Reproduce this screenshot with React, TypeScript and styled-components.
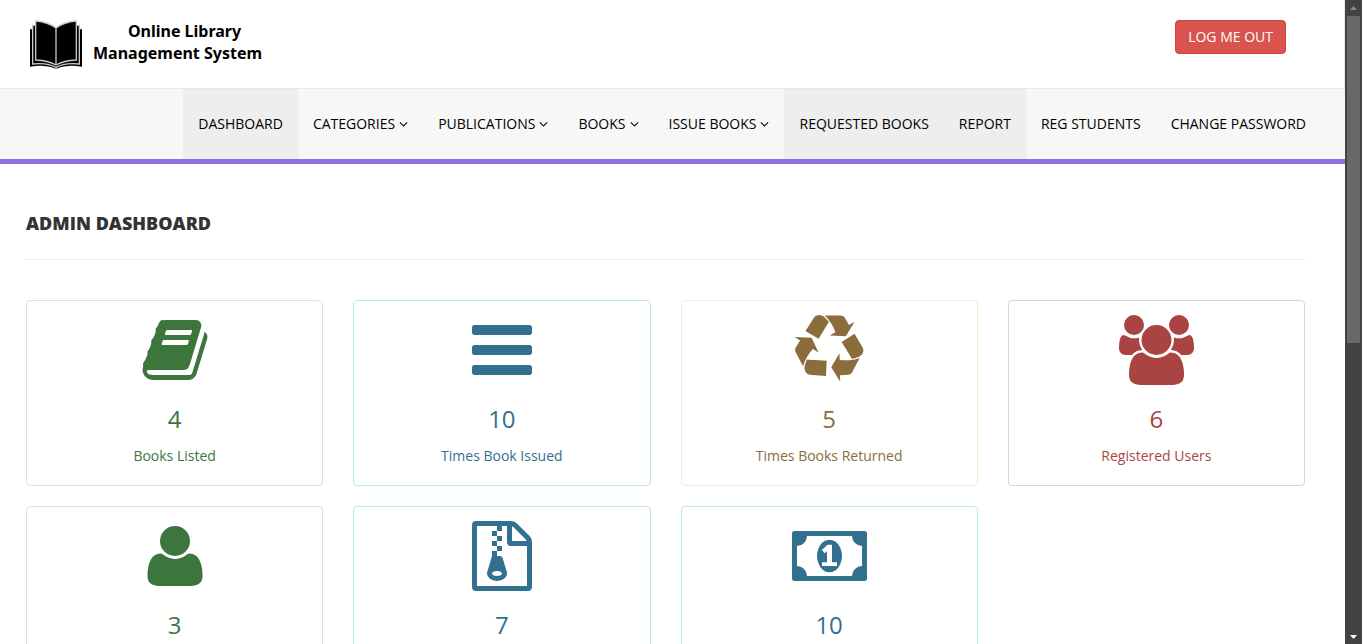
import React from "react";
import styled, { createGlobalStyle } from "styled-components";

const GlobalStyle = createGlobalStyle`
  *, *::before, *::after { box-sizing: border-box; }
  html, body { margin: 0; height: 100%; overflow: hidden; }
  body {
    background: #fff;
    color: #333;
    font-family: "Open Sans", "Liberation Sans", sans-serif;
    font-size: 14px;
    line-height: 20px;
  }
`;

const tones = {
  success: { text: "#3c763d", border: "#d6e9c6" },
  info: { text: "#31708f", border: "#bce8f1" },
  warning: { text: "#8a6d3b", border: "#faebcc" },
  danger: { text: "#a94442", border: "#ebccd1" },
};
type Tone = keyof typeof tones;

const Window = styled.div`
  display: grid;
  grid-template-columns: minmax(0, 1fr) 17px;
  height: 100vh;
  overflow: hidden;
`;

const Page = styled.div`
  min-width: 0;
  overflow: hidden;
`;

const Header = styled.header`
  display: flex;
  justify-content: space-between;
  align-items: flex-start;
  padding: 20px 58px 18px 30px;
  border-right: 1px solid #e7e7e7;
  border-bottom: 1px solid #e7e7e7;
`;

const Brand = styled.a`
  display: flex;
  align-items: flex-start;
  gap: 11px;
  color: #000;
  text-decoration: none;
`;

const BrandMark = styled.svg`
  width: 52px;
  height: 50px;
`;

const BrandName = styled.span`
  display: flex;
  flex-direction: column;
  font-family: "Noto Sans", "Open Sans", sans-serif;
  font-size: 16px;
  font-weight: 700;
  line-height: 22px;
  text-align: center;
`;

const BrandLine = styled.span<{ $indent?: boolean }>`
  padding-left: ${(p) => (p.$indent ? "14px" : "0")};
`;

const LogoutButton = styled.button`
  padding: 6px 12px;
  border: 1px solid #d43f3a;
  border-radius: 4px;
  background: #d9534f;
  color: #fff;
  font: inherit;
  cursor: pointer;
`;

const Nav = styled.nav`
  background: #f7f7f7;
  border-bottom: 5px solid #9170e4;
  padding-right: 24px;
`;

const NavList = styled.ul`
  display: flex;
  justify-content: flex-end;
  margin: 0;
  padding: 0;
  list-style: none;
`;

const NavLink = styled.a<{ $shaded?: boolean }>`
  display: flex;
  align-items: center;
  gap: 4px;
  padding: 25px 15px;
  background: ${(p) => (p.$shaded ? "#eee" : "transparent")};
  color: #000;
  text-decoration: none;
  white-space: nowrap;
`;

const Caret = styled.svg`
  width: 9px;
  height: 14px;
  fill: currentColor;
`;

const Main = styled.main`
  padding: 49px 40px 0 26px;
`;

const Title = styled.h1`
  margin: 0 0 40px;
  padding-bottom: 26px;
  border-bottom: 1px solid #eee;
  font-size: 18px;
  font-weight: 800;
  line-height: 20px;
`;

const Cards = styled.div`
  display: grid;
  grid-template-columns: repeat(4, minmax(0, 1fr));
  grid-auto-rows: minmax(186px, auto);
  gap: 20px 30px;
`;

const Card = styled.article<{ $tone: Tone }>`
  display: flex;
  flex-direction: column;
  align-items: center;
  padding: 14px 15px;
  border: 1px solid ${(p) => tones[p.$tone].border};
  border-radius: 4px;
  color: ${(p) => tones[p.$tone].text};
  text-align: center;
`;

const CardIcon = styled.svg`
  height: 70px;
  fill: currentColor;
`;

const Count = styled.h2`
  margin: 21px 0 14px;
  font-size: 24px;
  font-weight: 400;
  line-height: 26px;
`;

const Label = styled.span``;

const ScrollTrack = styled.div`
  display: flex;
  flex-direction: column;
  align-items: center;
  justify-content: space-between;
  background: #424242;
`;

const ScrollTop = styled.div`
  flex: 1;
  display: flex;
  flex-direction: column;
  align-items: center;
`;

const ScrollArrow = styled.svg`
  display: block;
  width: 17px;
  height: 16px;
`;

const ScrollThumb = styled.div`
  width: 13px;
  height: 52%;
  background: #686868;
`;

interface Glyph {
  width: number;
  d: string;
}

const glyphs: Record<string, Glyph> = {
  book: {
    width: 1792,
    d: "M1703 478q40 57 18 129l-275 906q-19 64-76.5 107.5t-122.5 43.5h-923q-77 0-148.5-53.5t-99.5-131.5q-24-67-2-127 0-4 3-27t4-37q1-8-3-21.5t-3-19.5q2-11 8-21t16.5-23.5 16.5-23.5q23-38 45-91.5t30-91.5q3-10 .5-30t-.5-28q3-11 17-28t17-23q21-36 42-92t25-90q1-9-2.5-32t.5-28q4-13 22-30.5t22-22.5q19-26 42.5-84.5t27.5-96.5q1-8-3-25.5t-2-26.5q2-8 9-18t18-23 17-21q8-12 16.5-30.5t15-35 16-36 19.5-32 26.5-23.5 36-11.5 47.5 5.5l-1 3q38-9 51-9h761q74 0 114 56t18 130l-274 906q-36 119-71.5 153.5t-128.5 34.5h-869q-27 0-38 15-11 16-1 43 24 70 144 70h923q29 0 56-15.5t35-41.5l300-987q7-22 5-57 38 15 59 43zm-1064 2q-4 13 2 22.5t20 9.5h608q13 0 25.5-9.5t16.5-22.5l21-64q4-13-2-22.5t-20-9.5h-608q-13 0-25.5 9.5t-16.5 22.5zm-83 256q-4 13 2 22.5t20 9.5h608q13 0 25.5-9.5t16.5-22.5l21-64q4-13-2-22.5t-20-9.5h-608q-13 0-25.5 9.5t-16.5 22.5z",
  },
  bars: {
    width: 1792,
    d: "M1664 1344v128q0 26-19 45t-45 19h-1408q-26 0-45-19t-19-45v-128q0-26 19-45t45-19h1408q26 0 45 19t19 45zm0-512v128q0 26-19 45t-45 19h-1408q-26 0-45-19t-19-45v-128q0-26 19-45t45-19h1408q26 0 45 19t19 45zm0-512v128q0 26-19 45t-45 19h-1408q-26 0-45-19t-19-45v-128q0-26 19-45t45-19h1408q26 0 45 19t19 45z",
  },
  recycle: {
    width: 1792,
    d: "M836 1169l-15 368-2 22-420-29q-36-3-67-31.5t-47-65.5q-11-27-14.5-55t4-65 12-55 21.5-64 19-53q78 12 509 28zm-387-586l180 379-147-92q-63 72-111.5 144.5t-72.5 125-39.5 94.5-18.5 63l-4 21-190-357q-17-26-18-56t6-47l8-18q35-63 114-188l-140-86zm1231 517l-188 359q-12 29-36.5 46.5t-43.5 20.5l-18 4q-71 7-219 12l8 164-230-367 211-362 7 173q170 16 283 5t170-33zm-785-924q-47 63-265 435l-317-187-19-12 225-356q20-31 60-45t80-10q24 2 48.5 12t42 21 41.5 33 36 34.5 36 39.5 32 35zm655 307l212 363q18 37 12.5 76t-27.5 74q-13 20-33 37t-38 28-48.5 22-47 16-51.5 14-46 12q-34-72-265-436l313-195zm-143-226l142-83-220 373-419-20 151-86q-34-89-75-166t-75.5-123.5-64.5-80-47-46.5l-17-13 405 1q31-3 58 10.5t39 28.5l11 15q39 61 112 190z",
  },
  users: {
    width: 1920,
    d: "M593 896q-162 5-265 128h-134q-82 0-138-40.5t-56-118.5q0-353 124-353 6 0 43.5 21t97.5 42.5 119 21.5q67 0 133-23-5 37-5 66 0 139 81 256zm1071 637q0 120-73 189.5t-194 69.5h-874q-121 0-194-69.5t-73-189.5q0-53 3.5-103.5t14-109 26.5-108.5 43-97.5 62-81 85.5-53.5 111.5-20q10 0 43 21.5t73 48 107 48 135 21.5 135-21.5 107-48 73-48 43-21.5q61 0 111.5 20t85.5 53.5 62 81 43 97.5 26.5 108.5 14 109 3.5 103.5zm-1024-1277q0 106-75 181t-181 75-181-75-75-181 75-181 181-75 181 75 75 181zm704 384q0 159-112.5 271.5t-271.5 112.5-271.5-112.5-112.5-271.5 112.5-271.5 271.5-112.5 271.5 112.5 112.5 271.5zm576 225q0 78-56 118.5t-138 40.5h-134q-103-123-265-128 81-117 81-256 0-29-5-66 66 23 133 23 59 0 119-21.5t97.5-42.5 43.5-21q124 0 124 353zm-128-609q0 106-75 181t-181 75-181-75-75-181 75-181 181-75 181 75 75 181z",
  },
  user: {
    width: 1792,
    d: "M1600 1405q0 120-73 189.5t-194 69.5h-874q-121 0-194-69.5t-73-189.5q0-53 3.5-103.5t14-109 26.5-108.5 43-97.5 62-81 85.5-53.5 111.5-20q9 0 42 21.5t74.5 48 108 48 133.5 21.5 133.5-21.5 108-48 74.5-48 42-21.5q61 0 111.5 20t85.5 53.5 62 81 43 97.5 26.5 108.5 14 109 3.5 103.5zm-320-893q0 159-112.5 271.5t-271.5 112.5-271.5-112.5-112.5-271.5 112.5-271.5 271.5-112.5 271.5 112.5 112.5 271.5z",
  },
  archive: {
    width: 1792,
    d: "M768 384v-128h-128v128h128zm128 128v-128h-128v128h128zm-128 128v-128h-128v128h128zm128 128v-128h-128v128h128zm700-388q28 28 48 76t20 88v1152q0 40-28 68t-68 28h-1344q-40 0-68-28t-28-68v-1600q0-40 28-68t68-28h896q40 0 88 20t76 48zm-444-244v376h376q-10-29-22-41l-313-313q-12-12-41-22zm384 1528v-1024h-416q-40 0-68-28t-28-68v-416h-128v128h-128v-128h-512v1536h1280zm-627-721l107 349q8 27 8 52 0 83-72.5 137.5t-183.5 54.5-183.5-54.5-72.5-137.5q0-25 8-52 21-63 120-396v-128h128v128h79q22 0 39 13t23 34zm-141 465q53 0 90.5-19t37.5-45-37.5-45-90.5-19-90.5 19-37.5 45 37.5 45 90.5 19z",
  },
  money: {
    width: 1920,
    d: "M768 1152h384v-96h-128v-448h-114l-148 137 77 80q42-37 55-57h2v288h-128v96zm512-256q0 70-21 142t-59.5 134-101.5 101-138 39-138-39-101.5-101-59.5-134-21-142 21-142 59.5-134 101.5-101 138-39 138 39 101.5 101 59.5 134 21 142zm512 256v-512q-106 0-181-75t-75-181h-1152q0 106-75 181t-181 75v512q106 0 181 75t75 181h1152q0-106 75-181t181-75zm128-832v1152q0 26-19 45t-45 19h-1792q-26 0-45-19t-19-45v-1152q0-26 19-45t45-19h1792q26 0 45 19t19 45z",
  },
};

const navItems = [
  { text: "DASHBOARD", shaded: true },
  { text: "CATEGORIES", menu: true },
  { text: "PUBLICATIONS", menu: true },
  { text: "BOOKS", menu: true },
  { text: "ISSUE BOOKS", menu: true },
  { text: "REQUESTED BOOKS", shaded: true },
  { text: "REPORT", shaded: true },
  { text: "REG STUDENTS" },
  { text: "CHANGE PASSWORD" },
];

const stats: { icon: string; tone: Tone; count: number; label?: string }[] = [
  { icon: "book", tone: "success", count: 4, label: "Books Listed" },
  { icon: "bars", tone: "info", count: 10, label: "Times Book Issued" },
  { icon: "recycle", tone: "warning", count: 5, label: "Times Books Returned" },
  { icon: "users", tone: "danger", count: 6, label: "Registered Users" },
  { icon: "user", tone: "success", count: 3 },
  { icon: "archive", tone: "info", count: 7 },
  { icon: "money", tone: "info", count: 10 },
];

function OpenBook() {
  return (
    <BrandMark viewBox="0 0 156 150" aria-hidden="true">
      <path d="M0 28H20V60H136V28H156V140Q116 134 90 142Q78 149 66 142Q40 134 0 140Z" fill="#000" />
      <g stroke="#c8c8c8" strokeWidth="4" fill="#000">
        <path d="M8 16H30V60H126V16H148V132Q104 127 78 142Q52 127 8 132Z" />
        <path d="M17 3Q54 6 78 24Q102 6 139 3V120Q102 121 78 135Q54 121 17 120Z" />
        <path d="M78 24V135" />
      </g>
    </BrandMark>
  );
}

export default function App() {
  return (
    <>
      <GlobalStyle />
      <Window>
        <Page>
          <Header>
            <Brand href="#">
              <OpenBook />
              <BrandName>
                <BrandLine $indent>Online Library</BrandLine>
                <BrandLine>Management System</BrandLine>
              </BrandName>
            </Brand>
            <LogoutButton type="button">LOG ME OUT</LogoutButton>
          </Header>
          <Nav>
            <NavList>
              {navItems.map((item) => (
                <li key={item.text}>
                  <NavLink href="#" $shaded={item.shaded}>
                    {item.text}
                    {item.menu && (
                      <Caret viewBox="320 0 1152 1792" aria-hidden="true">
                        <path d="M1395 736q0 13-10 23l-466 466q-10 10-23 10t-23-10l-466-466q-10-10-10-23t10-23l50-50q10-10 23-10t23 10l393 393 393-393q10-10 23-10t23 10l50 50q10 10 10 23z" />
                      </Caret>
                    )}
                  </NavLink>
                </li>
              ))}
            </NavList>
          </Nav>
          <Main>
            <Title>ADMIN DASHBOARD</Title>
            <Cards>
              {stats.map((s) => (
                <Card key={s.icon} $tone={s.tone}>
                  <CardIcon viewBox={`0 0 ${glyphs[s.icon].width} 1792`} aria-hidden="true">
                    <path d={glyphs[s.icon].d} />
                  </CardIcon>
                  <Count>{s.count}</Count>
                  {s.label && <Label>{s.label}</Label>}
                </Card>
              ))}
            </Cards>
          </Main>
        </Page>
        <ScrollTrack aria-hidden="true">
          <ScrollTop>
            <ScrollArrow viewBox="0 0 17 16">
              <path d="M5 10L8.500 6L12 10Z" fill="#8a8a8a" />
            </ScrollArrow>
            <ScrollThumb />
          </ScrollTop>
          <ScrollArrow viewBox="0 0 17 16">
            <path d="M5 7H12L8.500 11Z" fill="#fff" />
          </ScrollArrow>
        </ScrollTrack>
      </Window>
    </>
  );
}
